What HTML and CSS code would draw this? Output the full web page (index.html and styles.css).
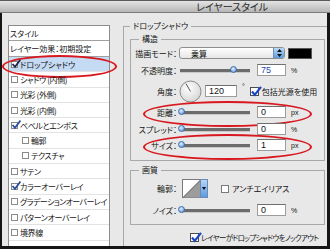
FILE: index.html
```html
<!DOCTYPE html>
<html>
<head>
  <title>レイヤースタイル</title>
  <link rel="stylesheet" href="styles.css">
</head>
<body>
  <div class="window">
    <div class="titlebar">レイヤースタイル</div>
    <div class="frame">
      <ul class="styles">
        <li class="head">スタイル</li>
        <li class="preset">レイヤー効果：初期設定</li>
        <li class="selected"><span class="cb on"><svg width="10" height="10" viewBox="0 0 10 10"><path d="M1.5 5 L4 7.8 L9.5 0.5" fill="none" stroke="#1b2a55" stroke-width="1.8"/></svg></span>ドロップシャドウ</li>
        <li><span class="cb"></span>シャドウ (内側)</li>
        <li><span class="cb"></span>光彩 (外側)</li>
        <li><span class="cb"></span>光彩 (内側)</li>
        <li><span class="cb on"><svg width="10" height="10" viewBox="0 0 10 10"><path d="M1.5 5 L4 7.8 L9.5 0.5" fill="none" stroke="#2b4d9c" stroke-width="1.8"/></svg></span>ベベルとエンボス</li>
        <li class="indent"><span class="cb"></span>輪郭</li>
        <li class="indent"><span class="cb"></span>テクスチャ</li>
        <li><span class="cb"></span>サテン</li>
        <li><span class="cb on"><svg width="10" height="10" viewBox="0 0 10 10"><path d="M1.5 5 L4 7.8 L9.5 0.5" fill="none" stroke="#2b4d9c" stroke-width="1.8"/></svg></span>カラーオーバーレイ</li>
        <li class="long"><span class="cb"></span>グラデーションオーバーレイ</li>
        <li><span class="cb"></span>パターンオーバーレイ</li>
        <li><span class="cb"></span>境界線</li>
      </ul>

      <div class="main">
        <fieldset class="outer">
          <legend>ドロップシャドウ</legend>

          <fieldset class="box structure">
            <legend>構造</legend>
            <div class="row">
              <span class="label">描画モード：</span>
              <div class="select">
                <span>乗算</span>
                <span class="arrows"><svg width="5" height="8" viewBox="0 0 5 8"><path d="M2.5 0 L5 3 H0 Z M0 5 H5 L2.5 8 Z" fill="#111"/></svg></span>
              </div>
              <span class="swatch"></span>
            </div>
            <div class="row opacity">
              <span class="label">不透明度：</span>
              <div class="slider"><span class="thumb" style="left: 52px"></span></div>
              <span class="num active">75</span>
              <span class="unit">%</span>
            </div>
            <div class="row angle">
              <span class="label">角度：</span>
              <svg class="dial" width="23" height="23" viewBox="0 0 23 23">
                <defs>
                  <radialGradient id="dialFill" cx="40%" cy="35%" r="70%">
                    <stop offset="0" stop-color="#ffffff"/>
                    <stop offset="1" stop-color="#d4d4d4"/>
                  </radialGradient>
                </defs>
                <circle cx="11.5" cy="11.5" r="10.5" fill="url(#dialFill)" stroke="#8a8a8a"/>
                <line x1="11.5" y1="11.5" x2="7" y2="3.7" stroke="#555" stroke-width="1"/>
              </svg>
              <span class="num wide">120</span>
              <span class="unit deg">°</span>
              <span class="check"><svg width="12" height="11" viewBox="0 0 12 11"><path d="M2 5.5 L4.8 8.8 L11 0.8" fill="none" stroke="#1c45c4" stroke-width="2.2"/></svg></span>
              <span class="check-label">包括光源を使用</span>
            </div>
            <div class="row marked">
              <span class="label">距離：</span>
              <div class="slider"><span class="thumb"></span></div>
              <span class="num">0</span>
              <span class="unit">px</span>
            </div>
            <div class="row">
              <span class="label">スプレッド：</span>
              <div class="slider"><span class="thumb"></span></div>
              <span class="num">0</span>
              <span class="unit">%</span>
            </div>
            <div class="row marked size">
              <span class="label">サイズ：</span>
              <div class="slider"><span class="thumb"></span></div>
              <span class="num">1</span>
              <span class="unit">px</span>
            </div>
          </fieldset>

          <fieldset class="box quality">
            <legend>画質</legend>
            <div class="row contour-row">
              <span class="label">輪郭：</span>
              <svg class="contour" width="26" height="19" viewBox="0 0 26 19">
                <defs>
                  <linearGradient id="dropFill" x1="0" y1="0" x2="0" y2="1">
                    <stop offset="0" stop-color="#b9d7f7"/>
                    <stop offset="1" stop-color="#5b98de"/>
                  </linearGradient>
                </defs>
                <rect x="0.5" y="0.5" width="25" height="18" fill="#fff" stroke="#7a7a7a"/>
                <path d="M1 18.5 L18.5 1 V18.5 Z" fill="#9c9c9c"/>
                <line x1="1" y1="18.5" x2="18.5" y2="1" stroke="#555"/>
                <rect x="18.5" y="0.5" width="7" height="18" fill="url(#dropFill)" stroke="#6a8ab8"/>
                <path d="M20 8 H24 L22 11 Z" fill="#111"/>
              </svg>
              <span class="cb-box"></span>
              <span class="check-label">アンチエイリアス</span>
            </div>
            <div class="row noise">
              <span class="label">ノイズ：</span>
              <div class="slider"><span class="thumb"></span></div>
              <span class="num">0</span>
              <span class="unit">%</span>
            </div>
          </fieldset>

          <div class="knockout">
            <span class="check"><svg width="12" height="11" viewBox="0 0 12 11"><path d="M2 5.5 L4.8 8.8 L11 0.8" fill="none" stroke="#1c45c4" stroke-width="2.2"/></svg></span>
            <span class="check-label">レイヤーがドロップシャドウをノックアウト</span>
          </div>
        </fieldset>
      </div>
    </div>
  </div>
</body>
</html>
```

FILE: styles.css
```css
* {
  box-sizing: border-box;
}

body {
  margin: 0;
  font-family: "Noto Sans CJK JP", "Liberation Sans", sans-serif;
  font-size: 8px;
  font-feature-settings: "palt";
  color: #141414;
}

.window {
  width: 330px;
  height: 249px;
  overflow: hidden;
  background: #e8e8e8;
}

.titlebar {
  height: 13px;
  padding-left: 134px;
  background: linear-gradient(#e4e4e4, #b6b6b6);
  border-top: 1px solid #5a5a5a;
  border-bottom: 1px solid #7c7c7c;
  font-size: 10px;
  line-height: 11px;
  text-align: center;
  color: #2a2a2a;
}

.frame {
  display: flex;
  height: 236px;
  padding: 8px 0 0 6px;
  border-left: 2px solid #151515;
  border-right: 3px solid #151515;
  border-bottom: 3px solid #151515;
}

/* left list of effects */
.styles {
  list-style: none;
  margin: 4px 0 0;
  padding: 0;
  width: 102px;
  background: #fff;
  border: 1px solid #8c8c8c;
  border-bottom: none;
}

.styles li {
  position: relative;
  display: flex;
  align-items: center;
  gap: 2px;
  height: 15.3px;
  padding-left: 2px;
  border-bottom: 1px solid #e2e2e2;
  white-space: nowrap;
  letter-spacing: -0.4px;
}

.styles .head {
  height: 15px;
  padding-left: 1px;
  border-bottom: 1px solid #a0a0a0;
  letter-spacing: 0;
}

.styles .preset {
  height: 16px;
  padding-left: 1px;
  border-bottom: 1px solid #a0a0a0;
  letter-spacing: 0;
}

.styles .indent {
  padding-left: 13px;
}

.styles .long {
  letter-spacing: -0.6px;
}

.styles .selected {
  background: #c5daf3;
  letter-spacing: 0;
}

.styles .selected::after {
  content: "";
  position: absolute;
  left: -7px;
  top: -2px;
  width: 111px;
  height: 19px;
  border: 2px solid #d8171e;
  border-radius: 50%;
}

.cb {
  position: relative;
  flex: none;
  width: 7px;
  height: 7px;
  border: 1px solid #8a8a8a;
  background: #fff;
}

.cb svg {
  position: absolute;
  left: -1px;
  top: -3px;
}

/* right panel */
.main {
  flex: 1;
  margin-left: 13px;
}

fieldset {
  margin: 0;
  min-width: 0;
}

legend {
  padding: 0 3px;
  line-height: 10px;
}

.outer {
  height: 100%;
  padding: 0 0 0 6px;
  border: none;
  border-top: 1px solid #a8a8a8;
  border-left: 1px solid #a8a8a8;
}

.box {
  margin: 3px 2px 0 0;
  padding: 2px 0 8px;
  border: 1px solid #a8a8a8;
}

.box legend {
  margin-left: 8px;
}

.quality {
  margin-top: 4px;
  padding: 4px 0 7px;
}

.row {
  position: relative;
  display: flex;
  align-items: center;
  height: 14px;
  margin-top: 3px;
  white-space: nowrap;
}

.row:first-of-type {
  margin-top: 0;
}

.row.angle {
  height: 22px;
}

.row.size {
  margin-top: 2px;
}

.row.marked::after {
  content: "";
  position: absolute;
  left: 12px;
  top: -4px;
  width: 165px;
  height: 22px;
  border: 2px solid #d8171e;
  border-radius: 50%;
}

.label {
  flex: none;
  width: 46px;
  text-align: right;
}

.select {
  display: flex;
  align-items: center;
  justify-content: space-between;
  width: 106px;
  height: 12px;
  margin-left: 2px;
  padding-left: 11px;
  overflow: hidden;
  border: 1px solid #8e8e8e;
  border-radius: 3px;
  background: linear-gradient(#ffffff, #e6e6e6);
}

.arrows {
  display: flex;
  align-items: center;
  justify-content: center;
  width: 11px;
  height: 100%;
  border-left: 1px solid #6f8fb5;
  background: linear-gradient(#bcd9f7, #5d9be0);
}

.swatch {
  width: 24px;
  height: 11px;
  margin-left: 3px;
  background: #000;
  border: 1px solid #555;
}

.slider {
  position: relative;
  flex: none;
  width: 72px;
  height: 8px;
  margin-left: 1px;
}

.slider::before {
  content: "";
  position: absolute;
  left: 2px;
  right: 0;
  top: 3px;
  height: 3px;
  background: #6c6c6c;
  border-bottom: 1px solid #c9c9c9;
}

.thumb {
  position: absolute;
  left: 0;
  top: 0;
  width: 7px;
  height: 7px;
  border: 1px solid #3f70ae;
  border-radius: 50%;
  background: radial-gradient(circle at 40% 35%, #e2f1ff, #4f8bd6);
}

.num {
  width: 29px;
  height: 12px;
  margin-left: 7px;
  padding-left: 3px;
  border: 1px solid #9c9c9c;
  border-top-color: #6e6e6e;
  background: #fff;
  font-family: "Liberation Sans", sans-serif;
  font-size: 9px;
  line-height: 10px;
}

.num.active {
  color: #1f4da6;
}

.num.wide {
  width: 32px;
  margin-left: 3px;
}

.unit {
  margin-left: 5px;
  font-family: "Liberation Sans", sans-serif;
  font-size: 7px;
}

.unit.deg {
  align-self: flex-start;
  margin-top: 3px;
}

.dial {
  flex: none;
  margin-left: 2px;
}

.check {
  position: relative;
  flex: none;
  width: 9px;
  height: 9px;
  margin-left: 5px;
  border: 1px solid #4d4d4d;
  background: #fff;
}

.check svg {
  position: absolute;
  left: -1px;
  top: -2px;
}

.check-label {
  margin-left: 3px;
}

.contour-row {
  height: 19px;
}

.contour {
  flex: none;
  margin-left: 5px;
}

.cb-box {
  flex: none;
  width: 8px;
  height: 8px;
  margin-left: 13px;
  border: 1px solid #7a7a7a;
  background: #fff;
}

.row.noise {
  margin-top: 5px;
}

.knockout {
  display: flex;
  align-items: center;
  height: 12px;
  margin-top: 6px;
  padding-left: 60px;
  white-space: nowrap;
}

.knockout .check {
  margin-left: 0;
}

.knockout .check-label {
  margin-left: 2px;
  font-size: 7.5px;
  letter-spacing: -0.7px;
}
```
